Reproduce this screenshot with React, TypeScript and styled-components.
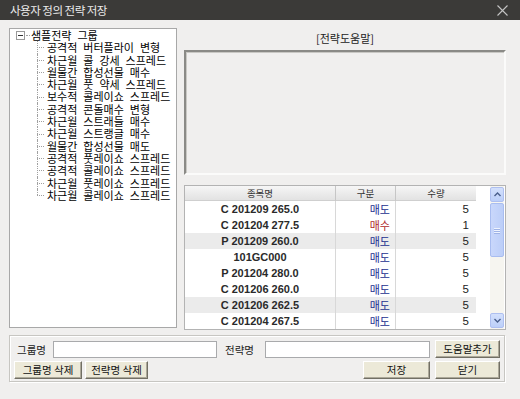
import React from "react";
import styled, { createGlobalStyle } from "styled-components";

const Global = createGlobalStyle`
  html, body { margin: 0; padding: 0; background: #f0efee; }
  body { font-family: "Noto Sans CJK KR", "Noto Sans", sans-serif; }
  * { box-sizing: border-box; }
`;

const KR = `"Noto Sans CJK KR", "Noto Sans", sans-serif`;
const LAT = `"Liberation Sans", Arial, sans-serif`;

const Window = styled.div`
  width: 520px;
  height: 399px;
  display: flex;
  flex-direction: column;
  background: #f0efee;
  overflow: hidden;
`;

const TitleBar = styled.div`
  height: 20px;
  flex: none;
  background: #3b3a38;
  display: flex;
  align-items: center;
  justify-content: space-between;
  padding: 0 12px 0 10px;
`;

const Title = styled.span`
  color: #ececec;
  font-family: ${KR};
  font-size: 11.5px;
  letter-spacing: -0.5px;
  line-height: 20px;
`;

const CloseIcon = styled.svg`
  width: 11px;
  height: 11px;
  display: block;
`;

const Body = styled.div`
  flex: 1;
  display: flex;
  flex-direction: column;
  padding: 8px 14px 0 9px;
`;

const MainRow = styled.div`
  display: flex;
  gap: 7px;
  align-items: flex-start;
`;

const TreePanel = styled.div`
  width: 168px;
  height: 300px;
  background: #fff;
  border: 1px solid #a8a8a8;
  font-family: ${KR};
  font-size: 11px;
  word-spacing: 3.5px;
  color: #000;
`;

const RootRow = styled.div`
  height: 12.3px;
  line-height: 12.3px;
  display: flex;
  align-items: center;
  padding-left: 6px;
  white-space: nowrap;
`;

const ToggleBox = styled.span`
  width: 9px;
  height: 9px;
  border: 1px solid #9a9a9a;
  background: #fff;
  display: flex;
  align-items: center;
  justify-content: center;
  flex: none;
  &::before {
    content: "";
    width: 5px;
    height: 1px;
    background: #333;
  }
`;

const Connector = styled.span`
  width: 4px;
  height: 1px;
  margin: 0 1px;
  border-top: 1px dotted #a0a0a0;
  flex: none;
`;

const ChildList = styled.div`
  display: flex;
  flex-direction: column;
`;

const ChildRow = styled.div<{ $last?: boolean }>`
  position: relative;
  height: 12.3px;
  line-height: 12.3px;
  padding-left: 37px;
  white-space: nowrap;
  &::before {
    content: "";
    position: absolute;
    left: 27px;
    top: 50%;
    width: 7px;
    border-top: 1px dotted #a0a0a0;
  }
  &::after {
    content: "";
    position: absolute;
    left: 27px;
    top: 0;
    height: ${(p) => (p.$last ? "50%" : "100%")};
    border-left: 1px dotted #a0a0a0;
  }
`;

const RightCol = styled.div`
  width: 322px;
  display: flex;
  flex-direction: column;
`;

const HelpLabel = styled.div`
  height: 22px;
  line-height: 20px;
  text-align: center;
  font-family: ${KR};
  font-size: 11px;
  color: #222;
`;

const HelpArea = styled.div`
  height: 125px;
  background: #f0efee;
  border-top: 2px solid #8a8a86;
  border-left: 2px solid #8a8a86;
  border-right: 2px solid #fbfbfa;
  border-bottom: 2px solid #fbfbfa;
  box-shadow: inset 1px 1px 0 #c9c8c4;
`;

const Grid = styled.div`
  margin-top: 10px;
  height: 145px;
  border: 1px solid #b3b3b3;
  background: #fff;
  display: flex;
`;

const Table = styled.div`
  width: 291px;
  display: grid;
  grid-template-columns: 151px 60px 80px;
  grid-auto-rows: 16px;
  grid-template-rows: 15px;
  align-content: start;
`;

const HeadCell = styled.div<{ $last?: boolean }>`
  background: linear-gradient(#f6f6f6, #e2e2e2);
  border-bottom: 1px solid #cfcfcf;
  border-right: ${(p) => (p.$last ? "none" : "1px solid #c6c6c6")};
  font-family: ${KR};
  font-size: 9.5px;
  color: #333;
  display: flex;
  align-items: center;
  justify-content: center;
  line-height: 14px;
`;

const Cell = styled.div<{ $gray?: boolean; $align: "center" | "right"; $pr?: number; $sep?: boolean }>`
  background: ${(p) => (p.$gray ? "#ebebeb" : "#ffffff")};
  border-right: ${(p) => (p.$sep ? "1px solid #d8d8d8" : "none")};
  display: flex;
  align-items: center;
  justify-content: ${(p) => (p.$align === "center" ? "center" : "flex-end")};
  padding-right: ${(p) => p.$pr ?? 0}px;
  white-space: nowrap;
`;

const CodeText = styled.span`
  font-family: ${LAT};
  font-weight: bold;
  font-size: 11px;
  color: #2a2a2a;
`;

const SideText = styled.span<{ $buy?: boolean }>`
  font-family: ${KR};
  font-size: 11px;
  color: ${(p) => (p.$buy ? "#b02a2a" : "#23308f")};
`;

const QtyText = styled.span`
  font-family: ${LAT};
  font-size: 11.5px;
  color: #222;
`;

const GridFiller = styled.div`
  width: 14px;
  background: #fff;
`;

const ScrollBar = styled.div`
  width: 14px;
  display: flex;
  flex-direction: column;
  padding: 1px 0;
  background: #f6f5f0;
`;

const ScrollBtn = styled.div`
  height: 15px;
  flex: none;
  background: linear-gradient(#d3e0fc, #bccff9);
  border: 1px solid #aebff0;
  border-radius: 2px;
  display: flex;
  align-items: center;
  justify-content: center;
`;

const Thumb = styled.div`
  height: 54px;
  flex: none;
  margin-top: 1px;
  background: linear-gradient(90deg, #c9d7fb, #bccef8);
  border: 1px solid #a9bdf0;
  border-radius: 2px;
  display: flex;
  flex-direction: column;
  align-items: center;
  justify-content: center;
  gap: 1px;
`;

const Grip = styled.span`
  width: 6px;
  height: 1px;
  background: #eef3fe;
  box-shadow: 0 1px 0 #9fb3e6;
`;

const Track = styled.div`
  flex: 1;
`;

const GroupBox = styled.div`
  margin-top: 5px;
  margin-right: 1px;
  height: 47px;
  border: 1px solid #c7c6c2;
  box-shadow: inset 1px 1px 0 #ffffff, 1px 1px 0 #ffffff;
  padding: 4px 4px 0 4px;
  display: flex;
  flex-direction: column;
  gap: 3px;
`;

const FormRow = styled.div`
  display: flex;
  align-items: center;
  height: 18px;
`;

const Label = styled.span<{ $ml: number; $w: number }>`
  margin-left: ${(p) => p.$ml}px;
  width: ${(p) => p.$w}px;
  font-family: ${KR};
  font-size: 10.5px;
  color: #222;
  white-space: nowrap;
`;

const TextInput = styled.input<{ $w: number }>`
  width: ${(p) => p.$w}px;
  height: 17px;
  border: 1px solid #a9aaac;
  background: #fff;
  padding: 0 3px;
  margin: 0;
  outline: none;
`;

const Button = styled.button<{ $w: number; $ml?: number }>`
  width: ${(p) => p.$w}px;
  height: 18px;
  margin: 0 0 0 ${(p) => p.$ml ?? 0}px;
  padding: 0;
  background: #ece9d8;
  border-top: 1px solid #ffffff;
  border-left: 1px solid #ffffff;
  border-right: 1px solid #716f64;
  border-bottom: 1px solid #716f64;
  box-shadow: inset -1px -1px 0 #aca899;
  font-family: ${KR};
  font-size: 10.5px;
  color: #111;
  line-height: 16px;
  white-space: nowrap;
`;

const Spacer = styled.div`
  flex: 1;
`;

const treeItems = [
  "공격적 버터플라이 변형",
  "차근월 콜 강세 스프레드",
  "월물간 합성선물 매수",
  "차근월 풋 약세 스프레드",
  "보수적 콜레이쇼 스프레드",
  "공격적 콘돌매수 변형",
  "차근월 스트래들 매수",
  "차근월 스트랭글 매수",
  "월물간 합성선물 매도",
  "공격적 풋레이쇼 스프레드",
  "공격적 콜레이쇼 스프레드",
  "차근월 풋레이쇼 스프레드",
  "차근월 콜레이쇼 스프레드",
];

const rows = [
  { code: "C 201209 265.0", side: "매도", qty: 5 },
  { code: "C 201204 277.5", side: "매수", qty: 1 },
  { code: "P 201209 260.0", side: "매도", qty: 5 },
  { code: "101GC000", side: "매도", qty: 5 },
  { code: "P 201204 280.0", side: "매도", qty: 5 },
  { code: "C 201206 260.0", side: "매도", qty: 5 },
  { code: "C 201206 262.5", side: "매도", qty: 5 },
  { code: "C 201204 267.5", side: "매도", qty: 5 },
];

const grayRows = new Set([2, 6]);

export default function App() {
  return (
    <>
      <Global />
      <Window>
        <TitleBar>
          <Title>사용자 정의 전략 저장</Title>
          <CloseIcon viewBox="0 0 11 11">
            <path d="M0.5 0.5 L10.5 10.5 M10.5 0.5 L0.5 10.5" stroke="#c4c4c4" strokeWidth="1.1" fill="none" />
          </CloseIcon>
        </TitleBar>
        <Body>
          <MainRow>
            <TreePanel>
              <RootRow>
                <ToggleBox />
                <Connector />
                <span>샘플전략 그룹</span>
              </RootRow>
              <ChildList>
                {treeItems.map((t, i) => (
                  <ChildRow key={t} $last={i === treeItems.length - 1}>
                    {t}
                  </ChildRow>
                ))}
              </ChildList>
            </TreePanel>
            <RightCol>
              <HelpLabel>[전략도움말]</HelpLabel>
              <HelpArea />
              <Grid>
                <Table>
                  <HeadCell>종목명</HeadCell>
                  <HeadCell>구분</HeadCell>
                  <HeadCell $last>수량</HeadCell>
                  {rows.map((r, i) => (
                    <React.Fragment key={r.code}>
                      <Cell $gray={grayRows.has(i)} $align="center" $sep>
                        <CodeText>{r.code}</CodeText>
                      </Cell>
                      <Cell $gray={grayRows.has(i)} $align="right" $pr={5} $sep>
                        <SideText $buy={r.side === "매수"}>{r.side}</SideText>
                      </Cell>
                      <Cell $gray={grayRows.has(i)} $align="right" $pr={7}>
                        <QtyText>{r.qty}</QtyText>
                      </Cell>
                    </React.Fragment>
                  ))}
                </Table>
                <GridFiller />
                <ScrollBar>
                  <ScrollBtn>
                    <svg width="7" height="5" viewBox="0 0 7 5">
                      <path d="M0.5 4 L3.5 1 L6.5 4" stroke="#4a5f8c" strokeWidth="1.4" fill="none" />
                    </svg>
                  </ScrollBtn>
                  <Thumb>
                    <Grip />
                    <Grip />
                    <Grip />
                  </Thumb>
                  <Track />
                  <ScrollBtn>
                    <svg width="7" height="5" viewBox="0 0 7 5">
                      <path d="M0.5 1 L3.5 4 L6.5 1" stroke="#4a5f8c" strokeWidth="1.4" fill="none" />
                    </svg>
                  </ScrollBtn>
                </ScrollBar>
              </Grid>
            </RightCol>
          </MainRow>
          <GroupBox>
            <FormRow>
              <Label $ml={3} $w={36}>그룹명</Label>
              <TextInput $w={164} />
              <Label $ml={8} $w={40}>전략명</Label>
              <TextInput $w={165} />
              <Button $w={65} $ml={5}>도움말추가</Button>
            </FormRow>
            <FormRow>
              <Button $w={68}>그룹명 삭제</Button>
              <Button $w={63} $ml={3}>전략명 삭제</Button>
              <Spacer />
              <Button $w={67}>저장</Button>
              <Button $w={65} $ml={5}>닫기</Button>
            </FormRow>
          </GroupBox>
        </Body>
      </Window>
    </>
  );
}
